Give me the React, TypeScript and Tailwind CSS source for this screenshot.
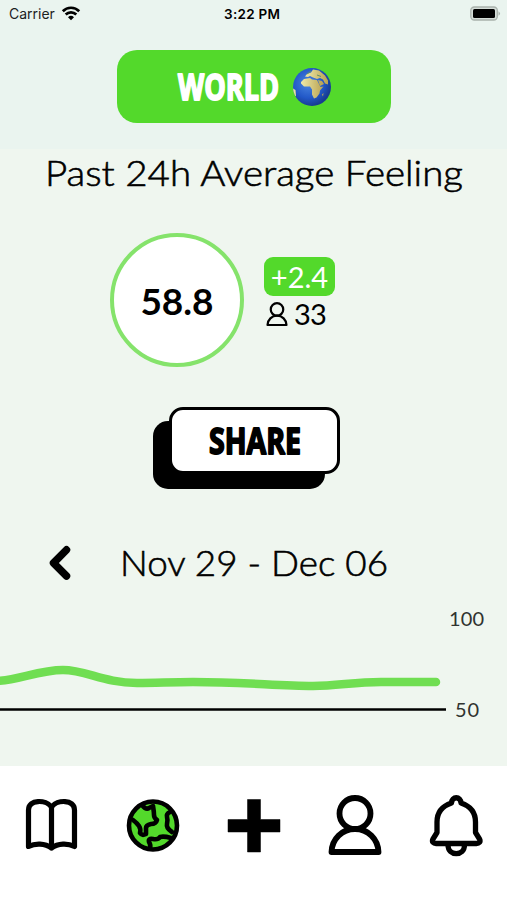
import React from "react";

const GREEN = "#53d92b";

export default function App() {
  return (
    <div className="flex h-[900px] w-[507px] flex-col overflow-hidden bg-[#eff6ef] font-['Lato',sans-serif] text-black">
      <div className="h-[149px] bg-[#eaf4ef]">
        <StatusBar />
        <button className="mx-auto mt-[22px] flex h-[73px] w-[274px] items-center rounded-[20px] bg-[#53d92b] pl-[61px]">
          <DisplayText width={101} className="fill-white stroke-white">WORLD</DisplayText>
          <Globe />
        </button>
      </div>

      <h1 className="flex h-[50px] justify-center">
        <LightText width={418}>Past 24h Average Feeling</LightText>
      </h1>

      <div className="mt-[34px] flex h-[134px] pl-[110px]">
        <div className="flex size-[134px] items-center justify-center rounded-full border-4 border-[#85e36b] bg-white">
          <span className="text-[37px] leading-none font-bold">58.8</span>
        </div>
        <div className="ml-5 pt-6">
          <div className="flex h-[39px] w-[71px] items-center justify-center rounded-[9px] bg-[#53d92b] text-[29px] text-white">
            +2.4
          </div>
          <div className="flex h-9 items-center pl-0.5 text-[29px] tracking-[-0.7px]">
            <PersonIcon className="mr-1.5 h-[25px] w-[22px]" strokeWidth={5.5} />
            33
          </div>
        </div>
      </div>

      <button className="relative mt-10 ml-[153px] h-[82px] w-[187px]">
        <span className="absolute bottom-0 left-0 h-[68px] w-[172px] rounded-[15px] bg-black" />
        <span className="absolute top-0 right-0 flex h-[67px] w-[171px] items-center justify-center rounded-[14px] border-[3.5px] border-black bg-white">
          <DisplayText width={92} className="fill-black stroke-black">SHARE</DisplayText>
        </span>
      </button>

      <div className="mt-[50px] flex h-[50px] items-center pl-[49px]">
        <svg className="mr-[49px] mb-0.5 h-9 w-[22px]" viewBox="0 0 22 36" fill="none" stroke="currentColor" strokeWidth="7.500" strokeLinecap="round" strokeLinejoin="round">
          <path d="M17.500 4.800 4.500 18 17.500 31" />
        </svg>
        <LightText width={268}>Nov 29 - Dec 06</LightText>
      </div>

      <Chart />

      <nav className="flex h-[134px] shrink-0 items-start bg-white pt-[27px] pl-[22px]">
        <BookIcon />
        <EarthIcon />
        <svg className="ml-[46px] h-[66px] w-[54px]" viewBox="0 0 54 66">
          <path d="M20.500 6.500h13v20H53v12.500H33.500v20h-13V39H1V26.500h19.500z" stroke="black" strokeWidth="0.500" strokeLinejoin="round" />
        </svg>
        <PersonIcon className="ml-[47px] h-[66px] w-[54px]" strokeWidth={5.8} large />
        <BellIcon />
      </nav>
    </div>
  );
}

function StatusBar() {
  return (
    <div className="flex h-7 items-center font-['Inter',sans-serif] text-[14px]">
      <span className="mb-0.5 ml-[9px] w-[52px] text-[#1c211e]">Carrier</span>
      <svg className="mb-0.5 h-[15px] w-[20px]" viewBox="0 0 19 15">
        <path d="M1.300 5.200a11.500 11.500 0 0 1 16.400 0M4.200 8.500a7.500 7.500 0 0 1 10.600 0" fill="none" stroke="black" strokeWidth="2.700" />
        <path d="M9.500 14.300 6.500 11.200a4.300 4.300 0 0 1 6 0z" />
      </svg>
      <span className="ml-[143px] w-[62px] text-[13.5px] font-semibold tracking-[0.3px] whitespace-nowrap">3:22 PM</span>
      <svg className="mr-1.5 mb-0.5 ml-auto h-[15px] w-8" viewBox="0 0 32 15">
        <rect x="1.800" y="1" width="26.500" height="13" rx="3.500" fill="#d5ddd8" stroke="#a9b1ac" strokeWidth="1.300" />
        <rect x="4" y="3" width="22" height="9" rx="1.500" />
        <path d="M29.500 5.200q3 2.300 0 4.600z" fill="#a9b1ac" />
      </svg>
    </div>
  );
}

function LightText({ width, children }: { width: number; children: string }) {
  return (
    <svg width={width} height="50" className="overflow-visible font-['Lato',sans-serif] font-light" stroke="black" strokeWidth="0.600">
      <text y="37" fontSize="36" textLength={width} lengthAdjust="spacingAndGlyphs">{children}</text>
    </svg>
  );
}

function DisplayText({ width, className, children }: { width: number; className: string; children: string }) {
  return (
    <svg width={width} height="40" className={`overflow-visible font-['Open_Sans',sans-serif] font-bold ${className}`} strokeWidth="1.900" strokeLinejoin="round">
      <text y="33" fontSize="36.500" textLength={width} lengthAdjust="spacingAndGlyphs">{children}</text>
    </svg>
  );
}

function Globe() {
  return (
    <svg className="ml-[13px] size-10" viewBox="0 0 40 40">
      <defs>
        <radialGradient id="sea" cx="40%" cy="40%" r="60%">
          <stop offset="0" stopColor="#4b87e0" />
          <stop offset="0.650" stopColor="#2258c8" />
          <stop offset="1" stopColor="#183c91" />
        </radialGradient>
        <linearGradient id="land" x1="0" x2="1">
          <stop offset="0" stopColor="#eee9a8" />
          <stop offset="1" stopColor="#b9a251" />
        </linearGradient>
        <clipPath id="disc">
          <circle cx="20" cy="20" r="19" />
        </clipPath>
      </defs>
      <circle cx="20" cy="20" r="19" fill="url(#sea)" />
      <g fill="url(#land)" clipPath="url(#disc)">
        <path d="M9 15l3-3 6-1 2 1.500 5 .5 2 4 1.500 3 3-.5-3.500 4-.5 3-3 4-2.500 1-2-4 0-5-2-3-6 0-3-3z" />
        <path d="M13 9.500l2-2.500 4-1.500 2-3 6 1 6 5 3 5 0 4-3-1-2-4-3-1.500-3 1-4-1.500-3-1.500-2 1z" />
        <path d="M26 13l4 1 2 3-4 2zM30 27.500l1.500-1.500-.5 3.500zM0 21l3.500 2 .5 6-3 0z" />
      </g>
      <path d="M15 7l4-3M25 8l4 1.500" stroke="#5f9268" strokeWidth="1" fill="none" />
    </svg>
  );
}

function Chart() {
  return (
    <svg className="h-[177px] w-full shrink-0" viewBox="0 589 507 177" fill="none">
      <path d="M-2 681C18 680 40 670 63 670S104 683 137 683C158 683 170 682 193 682C244 682 278 686 313 686C338 686 353 682 381 682H436" stroke="#70de52" strokeWidth="8.500" strokeLinecap="round" />
      <path d="M0 709.500H446" stroke="black" strokeWidth="2.500" />
      <g className="font-['Lato',sans-serif]" fill="#30332f" fontSize="20">
        <text x="449" y="625.500" textLength="35">100</text>
        <text x="455" y="716.500" textLength="24">50</text>
      </g>
    </svg>
  );
}

function PersonIcon({ className, strokeWidth, large }: { className: string; strokeWidth: number; large?: boolean }) {
  return (
    <svg className={className} viewBox={large ? "0 0 54 66" : "0 2 54 62"} fill="none" stroke="currentColor" strokeWidth={strokeWidth} strokeLinejoin="round">
      <circle cx="27" cy="20.500" r="15.500" />
      <path d="M3.500 59C4 46 14 36 27 36S50 46 50.500 59z" />
    </svg>
  );
}

function BookIcon() {
  return (
    <svg className="ml-[3px] h-[66px] w-[54px]" viewBox="0 0 54 66" fill="none" stroke="currentColor" strokeWidth="5.200" strokeLinecap="round" strokeLinejoin="round">
      <path d="M26.500 14C21 6.500 3.500 6 3.500 17V53.500C10 50 20 50 26.500 55C33 50 43 50 49.500 53.500V17C49.500 6 32 6.500 26.500 14V55" />
    </svg>
  );
}

function EarthIcon() {
  return (
    <svg className="ml-[46px] h-[66px] w-[56px]" viewBox="0 0 56 66" fill="none" stroke="currentColor" strokeWidth="4.600" strokeLinecap="round" strokeLinejoin="round">
      <circle cx="28" cy="32.500" r="24" fill={GREEN} />
      <path d="M17 12q4 5 7 3l4-2q1 6 1 9t3 5q-1 4-6 4-5 1-5 4t0 6q-4 2-6-1 1-4-1-7t-6-6" />
      <path d="M45 19q-4 2-3 5 1 3 0 7t5 8M25 55q1-3-1-6-1-4 4-3 5 1 7-2 4-1 11 1" />
    </svg>
  );
}

function BellIcon() {
  return (
    <svg className="ml-[47px] h-[66px] w-[54px]" viewBox="0 0 54 66" fill="none" stroke="currentColor" strokeWidth="5.300" strokeLinejoin="round">
      <path d="M22.500 10C22.500 3 32 3 32 10C41 13 46.500 19 46.500 29V39.500L50.500 46C52 49 50 50.500 47.500 50.500H7C4.500 50.500 2.500 49 4 46L8 39.500V29C8 19 13.500 13 22.500 10Z" />
      <path d="M19 52C19 63.500 35.500 63.500 35.500 52" />
    </svg>
  );
}
